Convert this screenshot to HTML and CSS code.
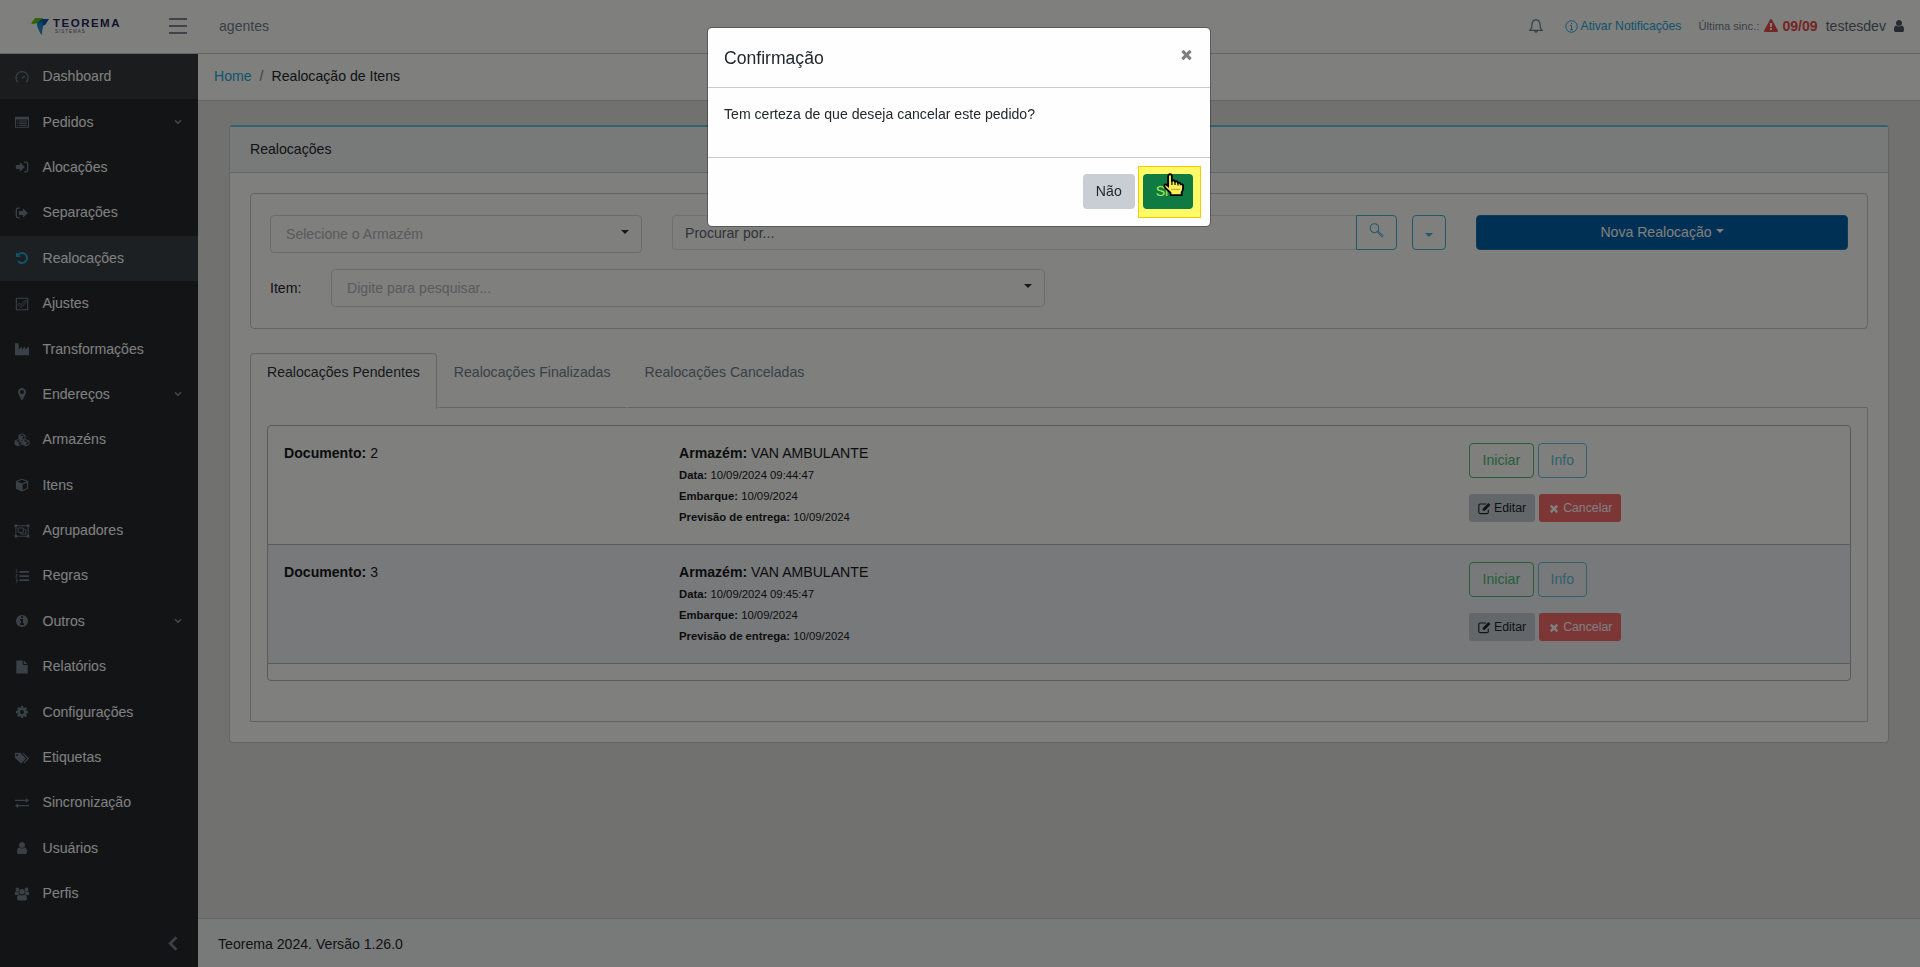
FILE: index.html
```html
<!DOCTYPE html>
<html lang="pt-BR">
<head>
  <meta charset="UTF-8" />
  <meta name="viewport" content="width=device-width, initial-scale=1.0"/>
  <title>Realocação de Itens</title>
  <link rel="stylesheet" href="styles.css">
</head>
<body>

<!-- ICONS -->
<svg class="sprite">
  <symbol id="i-dashboard" viewBox="0 0 16 16"><path d="M3.4 14A7 7 0 1 1 12.6 14M8 9.5l3.2-2.6M8 2v1.2M3 4l.8.8M1.5 9h1.2" fill="none" stroke="currentColor" stroke-width="1.3"/></symbol>
  <symbol id="i-list" viewBox="0 0 16 16"><path d="M0 2h16v12.500H0zM1.200 5.200v8.100h13.600V5.200z" fill-rule="evenodd"/><path d="M2.500 6.300h1.200v1.200H2.500zM4.700 6.300h9v1.200h-9zM2.500 8.700h1.200v1.200H2.500zM4.700 8.700h9v1.200h-9zM2.500 11.100h1.200v1.200H2.500zM4.700 11.100h9v1.200h-9z"/></symbol>
  <symbol id="i-in" viewBox="0 0 16 16"><path d="M1 5.800h4.500V2.500L11.200 8l-5.700 5.500v-3.300H1z"/><path d="M10.500 2.500h2a2 2 0 0 1 2 2v7a2 2 0 0 1-2 2h-2" fill="none" stroke="currentColor" stroke-width="1.500"/></symbol>
  <symbol id="i-out" viewBox="0 0 16 16"><path d="M4.500 5.800H9V2.500L14.700 8 9 13.500v-3.300H4.500z"/><path d="M5.500 2.500h-2a2 2 0 0 0-2 2v7a2 2 0 0 0 2 2h2" fill="none" stroke="currentColor" stroke-width="1.500"/></symbol>
  <symbol id="i-undo" viewBox="0 0 1792 1792"><path d="M1664 896q0 156-61 298t-164 245-245 164-298 61q-172 0-327-72.500t-264-204.500q-7-10-6.500-22.500t8.500-20.500l137-138q10-9 25-9 16 2 23 12 73 95 179 147t225 52q104 0 198.500-40.500t163.500-109.500 109.500-163.500 40.500-198.500-40.500-198.500-109.500-163.500-163.500-109.500-198.500-40.500q-98 0-188 35.500t-160 101.500l137 138q31 30 14 69-17 40-59 40h-448q-26 0-45-19t-19-45v-448q0-42 40-59 39-17 69 14l130 129q107-101 244.500-156.500t284.500-55.500q156 0 298 61t245 164 164 245 61 298z"/></symbol>
  <symbol id="i-check" viewBox="0 0 16 16"><path d="M1.500 1.500h13v13h-13z" fill="none" stroke="currentColor" stroke-width="1.200"/><path d="M3.500 8.500l1.500-1.500 2 2 5-5.500 1.500 1.500L7 12z" fill="none" stroke="currentColor"/></symbol>
  <symbol id="i-industry" viewBox="0 0 16 16"><path d="M0 1.500h4.200v7.200L8 5.200v3.500l3.700-3.500v3.500L16 5.200V15H0z"/></symbol>
  <symbol id="i-pin" viewBox="0 0 1792 1792"><path d="M1152 640q0-106-75-181t-181-75-181 75-75 181 75 181 181 75 181-75 75-181zm256 0q0 109-33 179l-364 774q-16 33-47.500 52t-67.500 19-67.500-19-46.500-52l-365-774q-33-70-33-179 0-212 150-362t362-150 362 150 150 362z"/></symbol>
  <symbol id="i-cubes" viewBox="0 0 18 16"><path d="M9 1l3.500 1.500v4L9 8 5.500 6.500v-4zM5.500 2.700L9 4.200l3.500-1.500M9 4.200V8M4.700 7.500L8.300 9v4l-3.600 1.600L1 13V9zM1 9.200l3.700 1.500L8.300 9.200M4.700 10.700v3.800M13.300 7.500L17 9v4l-3.700 1.600L9.700 13V9zM9.700 9.200l3.600 1.500L17 9.200M13.300 10.700v3.800" fill="none" stroke="currentColor" stroke-width="1.100"/><path d="M9 4.200L5.500 2.700v3.800L9 8zM4.700 10.700L1 9.200V13l3.700 1.600zM13.300 10.700l-3.600-1.500V13l3.600 1.600z"/></symbol>
  <symbol id="i-cube" viewBox="0 0 16 16"><path d="M8 .8L15 3.500v8.700L8 15.500 1 12.200V3.500zM8 2L2.700 4 8 6.200 13.300 4zM8.700 7.500v6.200l5-2.400V5.400z" fill-rule="evenodd"/></symbol>
  <symbol id="i-group" viewBox="0 0 18 16"><path d="M2 2h14v12H2zM4.500 4.500h6v5h-6zM10.500 6.500h3v5h-6v-2" fill="none" stroke="currentColor" stroke-width="1.100"/><path d="M.5.500h3v3h-3zM14.500.500h3v3h-3zM.5 12.500h3v3h-3zM14.500 12.500h3v3h-3z"/></symbol>
  <symbol id="i-ol" viewBox="0 0 16 16"><path d="M5 2.300h11v2H5zM5 7h11v2H5zM5 11.700h11v2H5z"/><path d="M1 1.200l1-.7v4M.7 6.300h1.800L.9 9.500h1.800M.8 11.500h1.700v3.800H.8M1.200 13.300h1" fill="none" stroke="currentColor" stroke-width=".9"/></symbol>
  <symbol id="i-info" viewBox="0 0 1792 1792"><path d="M1152 1376v-160q0-14-9-23t-23-9h-96v-512q0-14-9-23t-23-9h-320q-14 0-23 9t-9 23v160q0 14 9 23t23 9h96v320h-96q-14 0-23 9t-9 23v160q0 14 9 23t23 9h448q14 0 23-9t9-23zm-128-896v-160q0-14-9-23t-23-9h-192q-14 0-23 9t-9 23v160q0 14 9 23t23 9h192q14 0 23-9t9-23zm640 416q0 209-103 385.500t-279.500 279.500-385.500 103-385.500-103-279.500-279.500-103-385.500 103-385.500 279.500-279.500 385.500-103 385.500 103 279.500 279.500 103 385.500z"/></symbol>
  <symbol id="i-file" viewBox="0 0 16 16"><path d="M1.500.500h7.300v5.200h5.700v9.800h-13zM10 .700l4.300 3.900H10z"/></symbol>
  <symbol id="i-cog" viewBox="0 0 1792 1792"><path d="M1152 896q0-106-75-181t-181-75-181 75-75 181 75 181 181 75 181-75 75-181zm512-109v222q0 12-8 23t-20 13l-185 28q-19 54-39 91 35 50 107 138 10 12 10 25t-9 23q-27 37-99 108t-94 71q-12 0-26-9l-138-108q-44 23-91 38-16 136-29 186-7 28-36 28h-222q-14 0-24.500-8.500t-11.500-21.500l-28-184q-49-16-90-37l-141 107q-10 9-25 9-14 0-25-11-126-114-165-168-7-10-7-23 0-12 8-23 15-21 51-66.500t54-70.500q-27-50-41-99l-183-27q-13-2-21-12.500t-8-23.500v-222q0-12 8-23t19-13l186-28q14-46 39-92-40-57-107-138-10-12-10-24 0-10 9-23 26-36 98.500-107.500t94.500-71.500q13 0 26 10l138 107q44-23 91-38 16-136 29-186 7-28 36-28h222q14 0 24.500 8.500t11.500 21.500l28 184q49 16 90 37l142-107q9-9 24-9 13 0 25 10 129 119 165 170 7 8 7 22 0 12-8 23-15 21-51 66.500t-54 70.500q26 50 41 98l183 28q13 2 21 12.500t8 23.500z"/></symbol>
  <symbol id="i-tags" viewBox="0 0 17 16"><path d="M.5 2h5.800l6.700 6.700-5.700 5.600L.5 7.800zM3 3.300a1.200 1.200 0 1 0 .01 0z" fill-rule="evenodd"/><path d="M8.300 2h1.300l7 6.700-5.700 5.600-1-.9 4.700-4.700z"/></symbol>
  <symbol id="i-exchange" viewBox="0 0 16 16"><path d="M0 4.300h12.500V2.200L16 5l-3.500 2.800V5.700H0zM16 10.300H3.500V8.200L0 11l3.500 2.800v-2.100H16z"/></symbol>
  <symbol id="i-user" viewBox="0 0 1792 1792"><path d="M1536 1399q0 109-62.500 187t-150.500 78h-854q-88 0-150.500-78t-62.500-187q0-85 8.500-160.500t31.500-152 58.500-131 94-89 134.500-34.500q131 128 313 128t313-128q76 0 134.500 34.500t94 89 58.500 131 31.500 152 8.500 160.500zm-256-887q0 159-112.500 271.500t-271.500 112.500-271.500-112.500-112.500-271.500 112.500-271.500 271.500-112.500 271.500 112.500 112.500 271.500z"/></symbol>
  <symbol id="i-users" viewBox="0 0 17 16"><circle cx="8.500" cy="5.500" r="3.100"/><circle cx="3.300" cy="2.800" r="2.100"/><circle cx="13.700" cy="2.800" r="2.100"/><path d="M2.800 13.200c0-3 1-4.600 2.700-4.600q3 2.200 6 0c1.700 0 2.700 1.600 2.700 4.600 0 1.400-.8 2.200-2 2.200H4.800c-1.200 0-2-.8-2-2.200zM4.600 5.200L2 5.100C.8 5.100.2 6 .2 7.600.2 8.600.9 9 1.700 9h1.600l1.900-1.300zM12.400 5.200l2.600-.1c1.200 0 1.800.9 1.800 2.500 0 1-.7 1.400-1.500 1.400h-1.600l-1.900-1.300z"/></symbol>
  <symbol id="i-times" viewBox="0 0 1792 1792"><path d="M1490 1322q0 40-28 68l-136 136q-28 28-68 28t-68-28l-294-294-294 294q-28 28-68 28t-68-28l-136-136q-28-28-28-68t28-68l294-294-294-294q-28-28-28-68t28-68l136-136q28-28 68-28t68 28l294 294 294-294q28-28 68-28t68 28l136 136q28 28 28 68t-28 68l-294 294 294 294q28 28 28 68z"/></symbol>
  <symbol id="i-warning" viewBox="0 0 1792 1792"><path d="M1024 1375v-190q0-14-9.500-23.500t-22.500-9.500h-192q-13 0-22.500 9.500t-9.500 23.500v190q0 14 9.500 23.500t22.500 9.500h192q13 0 22.500-9.500t9.500-23.500zm-2-374l18-459q0-12-10-19-13-11-24-11h-220q-11 0-24 11-10 7-10 21l17 457q0 10 10 16.500t24 6.500h185q14 0 23.500-6.500t10.500-16.500zm-14-934l768 1408q35 63-2 126-17 29-46.500 46t-63.500 17h-1536q-34 0-63.500-17t-46.500-46q-37-63-2-126l768-1408q17-31 47-49t65-18 65 18 47 49z"/></symbol>
  <symbol id="i-edit" viewBox="0 0 16 16"><path d="M12.700 9.500v3a1.800 1.800 0 0 1-1.800 1.800H2.800A1.800 1.800 0 0 1 1 12.500V4.300a1.800 1.800 0 0 1 1.800-1.800h7.400" fill="none" stroke="currentColor" stroke-width="1.400"/><path d="M12.800 1.200l2.600 2.600-7 7H5.800V8.200z"/></symbol>
  <symbol id="i-chevron" viewBox="0 0 8 6"><path d="M1 1.300l3 3 3-3" fill="none" stroke="currentColor" stroke-width="1.400"/></symbol>
  <symbol id="i-search" viewBox="0 0 16 16"><ellipse cx="5.800" cy="5.500" rx="4.500" ry="4.800" fill="none" stroke="currentColor" stroke-width="1.100"/><path d="M8.500 9.300l1-1 5.700 5.200-1.300 1.600zM10.300 9.700l3.600 3.800" fill="none" stroke="currentColor"/></symbol>
</svg>

<header class="app-header">
  <div class="brand">
    <svg class="brand-mark" viewBox="0 0 18 17">
      <path d="M0 5.500L4 0h8L9 4.500 2.500 6z" fill="#5cc814"/>
      <path d="M6 5l5-4h7l-3.500 5.500L11 8.500 10.500 17 7 10z" fill="#1456b4"/>
      <path d="M6 5l5-1.500 1 5L10.500 17 7 10z" fill="#1a8ccc"/>
    </svg>
    <div class="brand-text">
      <span class="brand-name">TEOREMA</span>
      <span class="brand-sub">SISTEMAS</span>
    </div>
  </div>
  <div class="toggler"><span></span><span></span><span></span></div>
  <span class="tenant">agentes</span>
  <div class="header-right">
    <svg class="bell" viewBox="0 0 14 16"><path d="M1 12.300c1.600-1.300 2-2.800 2-5.500C3 3.700 4.600 1.800 7 1.800s4 1.900 4 5c0 2.700.4 4.200 2 5.500zM5.500 12.500a1.500 1.500 0 0 0 3 0" fill="none" stroke="currentColor" stroke-width="1.300"/></svg>
    <a class="notify"><svg class="notify-icon" viewBox="0 0 14 14"><circle cx="7" cy="7" r="6.200" fill="none" stroke="currentColor"/><path d="M7 3v1.400M5.600 5.800H7v4.700M5.500 10.500h3" fill="none" stroke="currentColor"/></svg>Ativar Notificações</a>
    <span class="sync">Última sinc.:</span>
    <span class="sync-date"><svg class="icon"><use href="#i-warning"/></svg>09/09</span>
    <span class="user-name">testesdev</span>
    <svg class="icon user-icon"><use href="#i-user"/></svg>
  </div>
</header>

<div class="app-body">
  <nav class="sidebar">
    <ul id="menu"></ul>
    <div class="minimizer"><svg viewBox="0 0 10 15"><path d="M8.500 1.200L2.200 7.500l6.300 6.300" fill="none" stroke="currentColor" stroke-width="2.800"/></svg></div>
  </nav>

  <main class="main">
    <div class="breadcrumb"><a>Home</a><i>/</i><span>Realocação de Itens</span></div>

    <div class="card">
      <div class="card-header">Realocações</div>
      <div class="card-body">

        <!-- FILTERS -->
        <div class="filters">
          <div class="filters-row">
            <div class="select">Selecione o Armazém<b class="caret"></b></div>
            <div class="search">
              <div class="search-input">Procurar por...</div>
              <div class="search-btn"><svg><use href="#i-search"/></svg></div>
              <div class="more-btn"><b class="caret"></b></div>
            </div>
            <button class="btn btn-primary">Nova Realocação<b class="caret"></b></button>
          </div>
          <div class="filters-item">
            <label>Item:</label>
            <div class="select">Digite para pesquisar...<b class="caret"></b></div>
          </div>
        </div>

        <!-- TABS -->
        <div class="tabs">
          <a class="tab active">Realocações Pendentes</a>
          <a class="tab">Realocações Finalizadas</a>
          <a class="tab">Realocações Canceladas</a>
        </div>
        <div class="tab-content">
          <div class="list" id="list"></div>
        </div>
      </div>
    </div>

    <footer class="app-footer">Teorema 2024. Versão 1.26.0</footer>
  </main>
</div>

<!-- MODAL -->
<div class="backdrop"></div>
<div class="modal">
  <div class="modal-header">
    <h4>Confirmação</h4>
    <svg class="close"><use href="#i-times"/></svg>
  </div>
  <div class="modal-body">Tem certeza de que deseja cancelar este pedido?</div>
  <div class="modal-footer">
    <button class="btn btn-secondary">Não</button>
    <div class="highlight">
      <button class="btn btn-success">Sim</button>
      <svg class="hand" viewBox="0 0 22 24"><path d="M7 1.200c1.300 0 1.900.9 1.900 2v4.500l1-.5c1 0 1.700.4 2 1.300 1.400-.5 2.600 0 3 1.200 1.500-.3 2.500.3 2.800 1.500 1.700-.2 2.500.8 2.500 2.300 0 3.500-.5 4.500-1.500 6v2.600H7.400v-2.300C5 17.500 2.500 15.600 1.400 13.300c-.4-1.500 1-2.400 2.200-1.600l1.500 1.200V3.200c0-1.100.7-2 1.900-2z" fill="#fdf15a" stroke="#000" stroke-width="1.900"/><path d="M8.900 8v4M12 9v3M15 10v2.500" stroke="#000" stroke-width="1.200"/><path d="M8 16q1.500 1.500 3 0 1.500 1.500 3 0 1.500 1.500 3 0" fill="none" stroke="#a89c20" stroke-width=".9"/></svg>
    </div>
  </div>
</div>

<script>
  const menu = [
    { name: 'Dashboard', icon: 'dashboard', cls: 'first' },
    { name: 'Pedidos', icon: 'list', sub: true },
    { name: 'Alocações', icon: 'in' },
    { name: 'Separações', icon: 'out' },
    { name: 'Realocações', icon: 'undo', cls: 'active' },
    { name: 'Ajustes', icon: 'check' },
    { name: 'Transformações', icon: 'industry' },
    { name: 'Endereços', icon: 'pin', sub: true },
    { name: 'Armazéns', icon: 'cubes' },
    { name: 'Itens', icon: 'cube' },
    { name: 'Agrupadores', icon: 'group' },
    { name: 'Regras', icon: 'ol' },
    { name: 'Outros', icon: 'info', sub: true },
    { name: 'Relatórios', icon: 'file' },
    { name: 'Configurações', icon: 'cog' },
    { name: 'Etiquetas', icon: 'tags' },
    { name: 'Sincronização', icon: 'exchange' },
    { name: 'Usuários', icon: 'user' },
    { name: 'Perfis', icon: 'users' },
  ];

  const docs = [
    { id: 2, armazem: 'VAN AMBULANTE', data: '10/09/2024 09:44:47', embarque: '10/09/2024', entrega: '10/09/2024' },
    { id: 3, armazem: 'VAN AMBULANTE', data: '10/09/2024 09:45:47', embarque: '10/09/2024', entrega: '10/09/2024' },
  ];

  document.getElementById('menu').innerHTML = menu.map(m => `
    <li class="${m.cls || ''}">
      <svg class="nav-icon"><use href="#i-${m.icon}"/></svg>
      <span>${m.name}</span>
      ${m.sub ? '<svg class="chevron"><use href="#i-chevron"/></svg>' : ''}
    </li>
  `).join('');

  document.getElementById('list').innerHTML = docs.map(d => `
    <div class="list-row">
      <div><b>Documento:</b> ${d.id}</div>
      <div>
        <div><b>Armazém:</b> ${d.armazem}</div>
        <p><b>Data:</b> ${d.data}</p>
        <p><b>Embarque:</b> ${d.embarque}</p>
        <p><b>Previsão de entrega:</b> ${d.entrega}</p>
      </div>
      <div class="actions">
        <div class="actions-row">
          <button class="btn btn-outline-success">Iniciar</button>
          <button class="btn btn-outline-info">Info</button>
        </div>
        <div class="actions-row">
          <button class="btn btn-sm btn-secondary"><svg class="icon"><use href="#i-edit"/></svg>Editar</button>
          <button class="btn btn-sm btn-danger"><svg class="icon"><use href="#i-times"/></svg>Cancelar</button>
        </div>
      </div>
    </div>
  `).join('');
</script>

</body>
</html>
```

FILE: styles.css
```css
* {
  box-sizing: border-box;
}

body {
  margin: 0;
  height: 967px;
  overflow: hidden;
  display: flex;
  flex-direction: column;
  font-family: "Liberation Sans", Arial, sans-serif;
  font-size: 14.1px;
  line-height: 21px;
  color: #23282c;
  background: #e2e2df;
}

svg {
  fill: currentColor;
  flex: none;
}

.sprite {
  position: absolute;
  width: 0;
  height: 0;
}

.icon {
  width: 14px;
  height: 14px;
}

/* header */
.app-header {
  display: flex;
  align-items: center;
  height: 54px;
  flex: none;
  padding-bottom: 1px;
  background: #fefefb;
  border-bottom: 1px solid #c8cbcd;
  color: #73818f;
}

.brand {
  display: flex;
  width: 169px;
  padding: 1px 0 0 31px;
}

.brand-mark {
  width: 18px;
  height: 17px;
}

.brand-text {
  display: flex;
  flex-direction: column;
  padding-left: 4px;
}

.brand-name {
  font-size: 11.5px;
  line-height: 11px;
  font-weight: bold;
  letter-spacing: 1.5px;
  color: #22285a;
}

.brand-sub {
  padding-left: 2px;
  font-size: 4.5px;
  line-height: 6px;
  letter-spacing: 1px;
  color: #555b78;
}

.toggler {
  width: 18px;
  display: flex;
  flex-direction: column;
  gap: 5px;
}

.toggler span {
  height: 2px;
  background: #7c8894;
}

.tenant {
  margin-left: 32px;
}

.header-right {
  display: flex;
  align-items: center;
  margin-left: auto;
  padding-right: 14px;
}

.bell {
  width: 14px;
  height: 16px;
  margin-right: 22px;
}

.notify {
  display: flex;
  align-items: center;
  gap: 3px;
  margin-right: 17px;
  font-size: 12.2px;
  color: #20a8d8;
}

.notify-icon {
  width: 13px;
  height: 13px;
}

.sync {
  margin-right: 5px;
  font-size: 11.2px;
}

.sync-date {
  display: flex;
  align-items: center;
  gap: 4px;
  margin-right: 8px;
  font-weight: bold;
  color: #e84a48;
}

.user-name {
  margin-right: 6px;
  color: #5c6873;
}

.user-icon {
  color: #4a5464;
}

/* sidebar */
.app-body {
  flex: 1;
  display: flex;
  min-height: 0;
}

.sidebar {
  width: 198px;
  display: flex;
  flex-direction: column;
  background: #26292b;
  color: #fff;
}

.sidebar ul {
  list-style: none;
  margin: 0;
  padding: 0;
}

.sidebar li {
  display: flex;
  align-items: center;
  height: 45.4px;
  padding: 0 16px 0 13px;
}

.sidebar li.first {
  background: #35383c;
}

.sidebar li.active {
  background: #384044;
}

.sidebar li.active .nav-icon {
  color: #20a8d8;
}

.nav-icon {
  width: 18px;
  height: 14px;
  margin-right: 11.5px;
  color: #73818f;
}

.chevron {
  width: 8px;
  height: 6px;
  margin-left: auto;
  color: #8a939a;
}

.minimizer {
  margin-top: auto;
  height: 48px;
  display: flex;
  align-items: center;
  justify-content: flex-end;
  padding-right: 20px;
  color: #73818f;
}

.minimizer svg {
  width: 10px;
  height: 15px;
}

/* content */
.main {
  flex: 1;
  display: flex;
  flex-direction: column;
}

.breadcrumb {
  height: 47px;
  padding: 12px 16px;
  background: #fefefb;
  border-bottom: 1px solid #c8cbcd;
}

.breadcrumb a {
  color: #20a8d8;
}

.breadcrumb i {
  margin: 0 8px;
  font-style: normal;
  color: #73818f;
}

.card {
  margin: 24px 31px 0;
  height: 618px;
  background: #fefefb;
  border: 1px solid #c8cbcd;
  border-top: 2px solid #63c2de;
  border-radius: 4px;
}

.card-header {
  height: 46px;
  padding: 12px 20px;
  background: #f1f2f3;
  border-bottom: 1px solid #c8cbcd;
}

.card-body {
  padding: 20px 20px;
}

.filters {
  height: 136px;
  padding: 21px 19px;
  border: 1px solid #c8cbcd;
  border-radius: 4px;
}

.filters-row {
  display: grid;
  grid-template-columns: 372px 1fr 372px;
  gap: 30px;
  align-items: start;
}

.select {
  display: flex;
  align-items: center;
  justify-content: space-between;
  height: 38px;
  padding: 0 12px 0 15px;
  border: 1px solid #d4d6d7;
  border-radius: 4px;
  color: #b4b6b8;
}

.select .caret {
  margin-top: -4px;
  color: #333;
}

.caret {
  display: inline-block;
  border: 4px solid transparent;
  border-top-color: currentColor;
  border-bottom: 0;
}

.search {
  display: flex;
}

.search-input {
  flex: 1;
  height: 35px;
  padding: 7px 12px;
  border: 1px solid #dfe2e3;
  border-right: 0;
  border-radius: 4px 0 0 4px;
  color: #5c6873;
}

.search-btn,
.more-btn {
  display: flex;
  align-items: center;
  justify-content: center;
  width: 41px;
  height: 35px;
  border: 1px solid #42b4d6;
  border-radius: 0 4px 4px 0;
  color: #42b4d6;
}

.search-btn svg {
  width: 15px;
  height: 15px;
  margin-top: -4px;
}

.more-btn {
  width: 34px;
  margin-left: 15px;
  border-radius: 4px;
}

.more-btn .caret {
  margin-top: 5px;
}

.filters-item {
  display: flex;
  align-items: center;
  margin-top: 16px;
}

.filters-item label {
  width: 61px;
}

.filters-item .select {
  width: 714px;
}

.btn {
  height: 35px;
  padding: 0 12px;
  font: inherit;
  color: #23282c;
  background: none;
  border: 1px solid transparent;
  border-radius: 4px;
}

.btn-primary {
  background: #0060a8;
  border-color: #187bac;
  color: #fff;
}

.btn-primary .caret {
  margin-left: 4px;
  vertical-align: 4px;
}

.btn-secondary {
  background: #c8ced3;
}

.btn-success {
  background: #0f7b43;
  color: #a8e84e;
}

.btn-danger {
  background: #f86c6b;
  color: #fff;
}

.btn-outline-success {
  padding: 0 12.5px;
  border-color: #4dbd74;
  color: #4dbd74;
}

.btn-outline-info {
  border-color: #63c2de;
  color: #63c2de;
}

.btn-sm {
  display: flex;
  align-items: center;
  gap: 3px;
  height: 28px;
  padding: 0 8px;
  font-size: 12.3px;
  border-radius: 3px;
}

.btn-sm .icon {
  width: 13px;
  height: 13px;
}

.btn-danger .icon {
  width: 12px;
}

/* tabs */
.tabs {
  display: flex;
  margin-top: 24px;
}

.tab {
  height: 55px;
  padding: 8px 16px;
  border: 1px solid transparent;
  color: #73818f;
}

.tab.active {
  margin-bottom: -1px;
  height: 56px;
  border-color: #c8cbcd;
  border-bottom: 0;
  border-radius: 4px 4px 0 0;
  color: #2f353a;
}

/* top line starts after the active tab */
.tab:not(.active) {
  border-bottom-color: #c8cbcd;
}

.tab:last-child {
  flex: 1;
}

.tab-content {
  height: 314px;
  padding: 17px 16px;
  border: 1px solid #c8cbcd;
  border-top: 0;
}

.list {
  height: 256px;
  border: 1px solid #b0b4b8;
  border-radius: 4px;
}

.list-row {
  display: grid;
  grid-template-columns: 395px 790px 1fr;
  height: 119px;
  padding: 17px 16px;
  border-bottom: 1px solid #b0b4b8;
  color: #181b1e;
}

.list-row:nth-child(even) {
  background: #f1f2f4;
}

.list-row p {
  margin: 0;
  font-size: 11.3px;
  line-height: 21.2px;
}

.list-row div + p {
  margin-top: 1px;
}

.actions-row {
  display: flex;
  gap: 4px;
  margin-bottom: 16px;
}

.app-footer {
  margin-top: auto;
  height: 49px;
  padding: 15px 20px;
  background: #f1f2f3;
  border-top: 1px solid #c8cbcd;
}

/* modal */
.backdrop {
  position: fixed;
  inset: 0;
  background: rgba(0, 0, 0, 0.5);
}

.modal {
  position: fixed;
  top: 27px;
  left: 707px;
  width: 504px;
  background: #fefefe;
  border: 1px solid rgba(0, 0, 0, 0.3);
  background-clip: padding-box;
  border-radius: 5px;
}

.modal-header {
  display: flex;
  justify-content: space-between;
  height: 60px;
  padding: 16px;
  border-bottom: 1px solid #c8cbcd;
}

.modal-header h4 {
  margin: 4px 0 0;
  font-size: 17.6px;
  font-weight: normal;
}

.close {
  width: 15px;
  height: 15px;
  margin: 3px 0 0;
  color: #808080;
}

.modal-body {
  height: 69px;
  padding: 16px;
}

.modal-footer {
  display: flex;
  justify-content: flex-end;
  gap: 8px;
  height: 69px;
  padding: 16px 17px;
  border-top: 1px solid #c8cbcd;
}

.highlight {
  position: relative;
  isolation: isolate;
}

.highlight::before {
  content: "";
  position: absolute;
  z-index: -1;
  inset: -8px -8px -8px -5px;
  background: #fffa68;
  border: 1px solid #ffc800;
}

.hand {
  position: absolute;
  left: 20px;
  top: -1px;
  width: 22px;
  height: 24px;
}
```
